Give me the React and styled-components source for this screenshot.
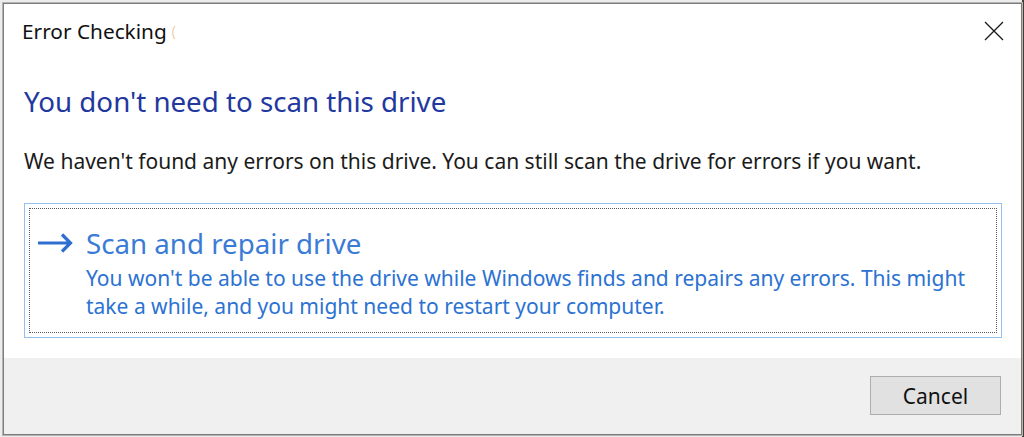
import React from "react";
import styled, { createGlobalStyle } from "styled-components";

const Global = createGlobalStyle`
  html, body { margin: 0; padding: 0; }
  body {
    width: 1024px;
    height: 437px;
    overflow: hidden;
    background: linear-gradient(to right, #ececec 0, #ececec 1022px, #4a3b32 1022px);
    font-family: "Noto Sans", "Open Sans", sans-serif;
  }
  #root { padding: 3px 0 0 3px; }
`;

const Window = styled.div`
  width: 1019px;
  height: 432px;
  box-sizing: border-box;
  border: 1px solid #7c7c7c;
  box-shadow: 0 0 0 1px #b4b4b4;
  background: #fff;
  display: flex;
  flex-direction: column;
`;

const TitleBar = styled.div`
  height: 54px;
  flex: none;
  display: flex;
  align-items: center;
  justify-content: space-between;
  padding: 0 17px 0 18px;
`;

const TitleText = styled.div`
  font-size: 20.8px;
  color: #111;
  display: flex;
  align-items: center;
`;

const Fragment = styled.span`
  margin-left: 5px;
  color: #e6c08e;
  font-size: 15px;
  font-weight: 300;
`;

const CloseButton = styled.div`
  width: 20px;
  height: 20px;
  display: flex;
  align-items: center;
  justify-content: center;
`;

const Content = styled.div`
  padding: 0 19px 0 20px;
  display: flex;
  flex-direction: column;
`;

const Heading = styled.div`
  margin-top: 26px;
  font-size: 27.7px;
  line-height: 34px;
  color: #22389e;
`;

const Body = styled.div`
  margin-top: 29px;
  font-size: 21px;
  line-height: 28px;
  color: #1b1b1b;
`;

const CommandLink = styled.div`
  margin-top: 28px;
  border: 1px solid #94c0ee;
  padding: 4px;
  height: 135px;
  box-sizing: border-box;
`;

const Focus = styled.div`
  height: 100%;
  box-sizing: border-box;
  border: 1px dotted #5c5c5c;
  display: grid;
  grid-template-columns: 48px 1fr;
  align-content: start;
  padding: 17px 4px 0 8px;
`;

const ArrowCell = styled.div`
  height: 34px;
  display: flex;
  align-items: center;
`;

const CmdText = styled.div`
  display: flex;
  flex-direction: column;
`;

const CmdTitle = styled.div`
  font-size: 27.7px;
  line-height: 34px;
  color: #3a7bd6;
`;

const CmdDesc = styled.div`
  margin-top: 4px;
  font-size: 21px;
  line-height: 28px;
  color: #2b72d2;
  white-space: nowrap;
`;

const Footer = styled.div`
  margin-top: 20px;
  flex: 1;
  background: #f0f0f0;
  display: flex;
  justify-content: flex-end;
  align-items: flex-start;
  padding: 18px 20px 0 0;
`;

const Button = styled.button`
  width: 131px;
  height: 39px;
  border: 1px solid #adadad;
  background: #e1e1e1;
  font-family: inherit;
  font-size: 21px;
  color: #111;
  padding: 0;
`;

export default function App() {
  return (
    <>
      <Global />
      <Window>
        <TitleBar>
          <TitleText>
            Error Checking<Fragment>(</Fragment>
          </TitleText>
          <CloseButton>
            <svg width="20" height="20" viewBox="0 0 20 20">
              <path d="M1 1 L19 19 M19 1 L1 19" stroke="#1a1a1a" strokeWidth="1.3" fill="none" />
            </svg>
          </CloseButton>
        </TitleBar>
        <Content>
          <Heading>You don't need to scan this drive</Heading>
          <Body>
            We haven't found any errors on this drive. You can still scan the drive for errors if you want.
          </Body>
          <CommandLink>
            <Focus>
              <ArrowCell>
                <svg width="35" height="22" viewBox="0 0 35 22">
                  <path d="M0 11 H32 M24 2.5 L32.5 11 L24 19.5" stroke="#2f6fd0" strokeWidth="3.2" fill="none" />
                </svg>
              </ArrowCell>
              <CmdText>
                <CmdTitle>Scan and repair drive</CmdTitle>
                <CmdDesc>
                  You won't be able to use the drive while Windows finds and repairs any errors. This might
                  <br />
                  take a while, and you might need to restart your computer.
                </CmdDesc>
              </CmdText>
            </Focus>
          </CommandLink>
        </Content>
        <Footer>
          <Button>Cancel</Button>
        </Footer>
      </Window>
    </>
  );
}
